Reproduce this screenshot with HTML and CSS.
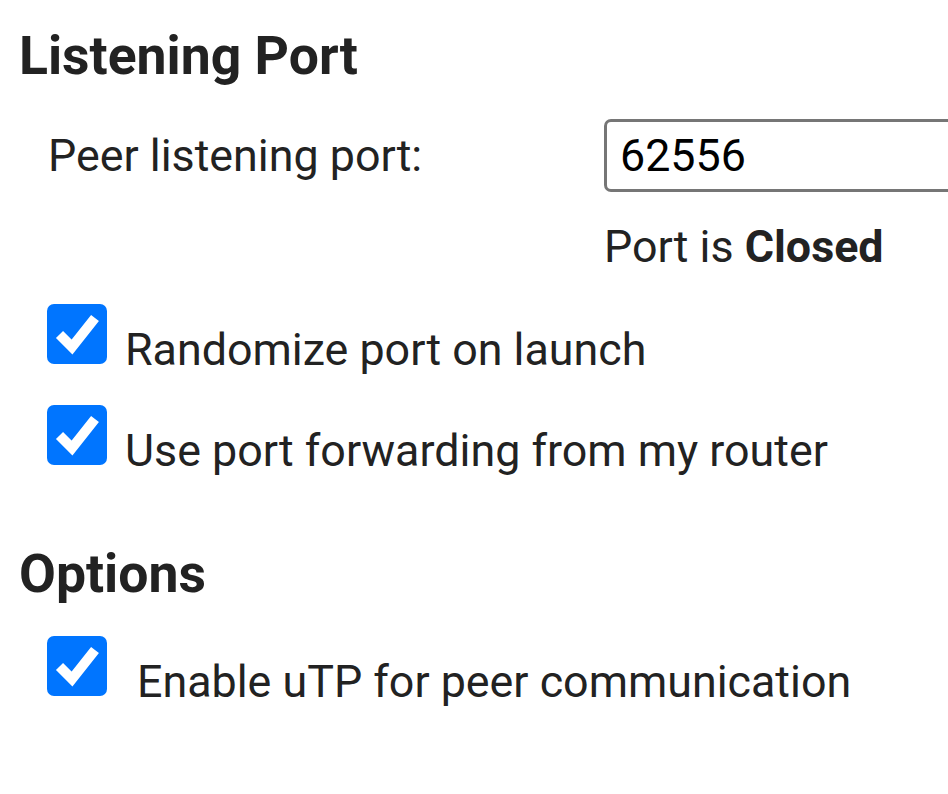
FILE: index.html
```html
<!DOCTYPE html>
<html lang="en">
<head>
<meta charset="utf-8">
<title>Peer settings</title>
<link rel="stylesheet" href="styles.css">
</head>
<body>
<div class="page">
  <section class="section">
    <h2 class="section-title">Listening Port</h2>
    <div class="port-grid">
      <label class="port-label" for="port">Peer listening port:</label>
      <input class="port-input" id="port" type="text" value="62556">
      <div class="port-status">Port is <strong>Closed</strong></div>
    </div>
    <div class="check-row first">
      <span class="checkbox"><svg viewBox="0 0 60 60" width="60" height="60"><polyline points="12.5,30.5 25,43 48,14" fill="none" stroke="#fff" stroke-width="10" stroke-linejoin="miter"/></svg></span>
      <span class="check-label">Randomize port on launch</span>
    </div>
    <div class="check-row">
      <span class="checkbox"><svg viewBox="0 0 60 60" width="60" height="60"><polyline points="12.5,30.5 25,43 48,14" fill="none" stroke="#fff" stroke-width="10" stroke-linejoin="miter"/></svg></span>
      <span class="check-label">Use port forwarding from my router</span>
    </div>
  </section>
  <section class="section options">
    <h2 class="section-title">Options</h2>
    <div class="check-row first">
      <span class="checkbox"><svg viewBox="0 0 60 60" width="60" height="60"><polyline points="12.5,30.5 25,43 48,14" fill="none" stroke="#fff" stroke-width="10" stroke-linejoin="miter"/></svg></span>
      <span class="check-label wide">Enable uTP for peer communication</span>
    </div>
  </section>
</div>
</body>
</html>
```
FILE: styles.css
```css
html, body {
  margin: 0;
  padding: 0;
  background: #fff;
  overflow: hidden;
}
body {
  font-family: Roboto, "Liberation Sans", sans-serif;
  font-size: 44.8px;
  line-height: 54px;
  color: #222;
}
.page {
  padding-top: 24px;
}
.section-title {
  margin: 0;
  padding-left: 19px;
  font-size: 53.5px;
  line-height: 64px;
  font-weight: 700;
  color: #222;
}
.port-grid {
  display: grid;
  grid-template-columns: 556px 400px;
  padding-left: 48px;
  margin-top: 31px;
  align-items: center;
}
.port-label {
  grid-column: 1;
}
.port-input {
  grid-column: 2;
  margin: 0;
  box-sizing: border-box;
  width: 400px;
  height: 73px;
  border: 3px solid #767676;
  border-radius: 7px;
  padding: 0 0 0 13px;
  font-family: Roboto, "Liberation Sans", sans-serif;
  font-size: 44.8px;
  color: #000;
  background: #fff;
  outline: none;
}
.port-status {
  grid-column: 2;
  margin-top: 28px;
}
.port-status strong {
  font-weight: 700;
}
.check-row {
  display: flex;
  align-items: flex-start;
  padding-left: 47px;
  margin-top: 30px;
}
.checkbox {
  flex: none;
  width: 60px;
  height: 60px;
  border-radius: 7px;
  background: #0075ff;
  display: flex;
}
.checkbox svg {
  display: block;
}
.check-label {
  margin-top: 19px;
  margin-left: 18px;
  white-space: nowrap;
}
.check-label.wide {
  margin-left: 30px;
}
.check-row + .check-row {
  margin-top: 28px;
}
.options {
  margin-top: 64px;
}
```
